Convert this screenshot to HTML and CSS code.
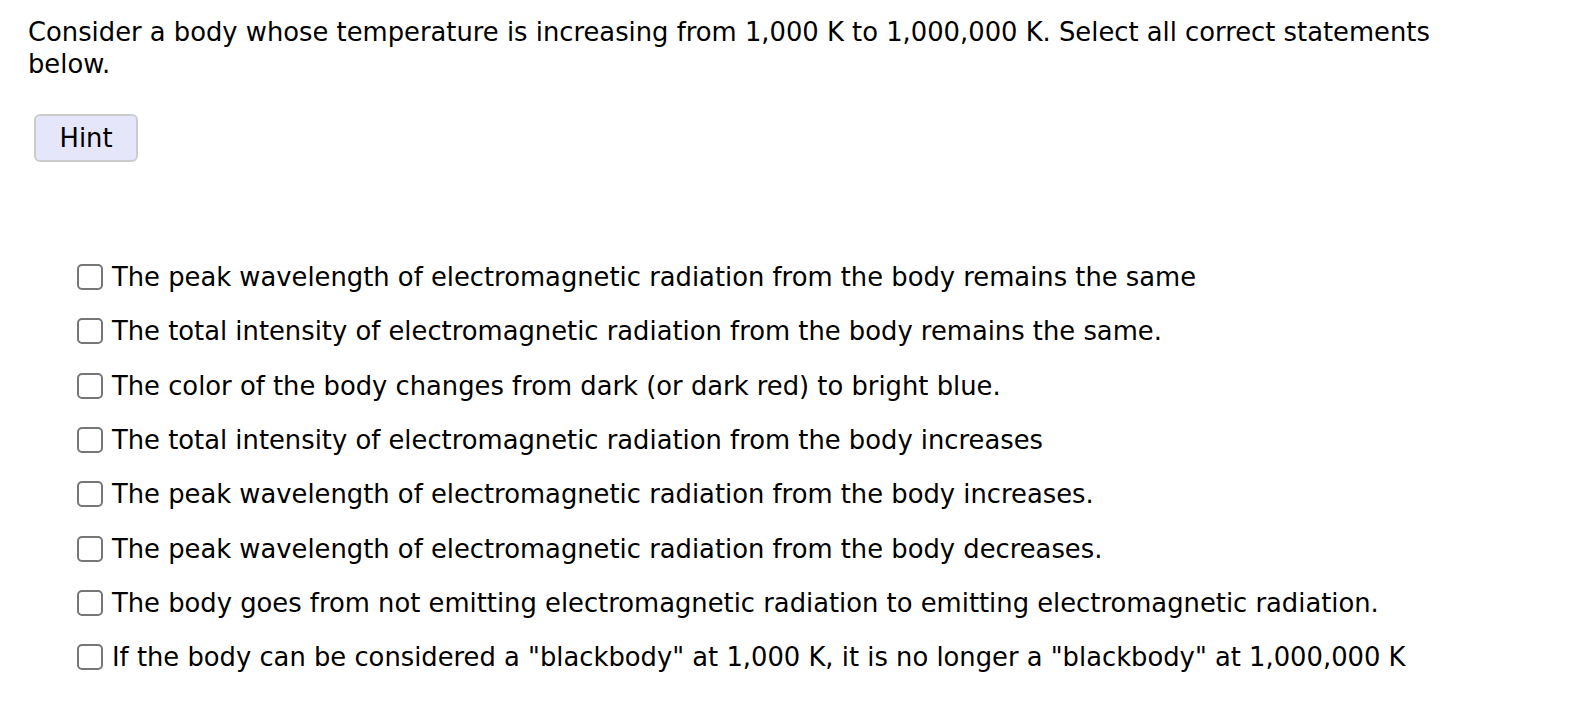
FILE: index.html
```html
<!DOCTYPE html>
<html>
<head>
<meta charset="utf-8">
<link rel="stylesheet" href="styles.css">
</head>
<body>
<div class="page">
  <p class="question">Consider a body whose temperature is increasing from 1,000 K to 1,000,000 K. Select all correct statements below.</p>
  <button class="hint" type="button">Hint</button>
  <ul class="choices">
    <li><label><input type="checkbox"><span>The peak wavelength of electromagnetic radiation from the body remains the same</span></label></li>
    <li><label><input type="checkbox"><span>The total intensity of electromagnetic radiation from the body remains the same.</span></label></li>
    <li><label><input type="checkbox"><span>The color of the body changes from dark (or dark red) to bright blue.</span></label></li>
    <li><label><input type="checkbox"><span>The total intensity of electromagnetic radiation from the body increases</span></label></li>
    <li><label><input type="checkbox"><span>The peak wavelength of electromagnetic radiation from the body increases.</span></label></li>
    <li><label><input type="checkbox"><span>The peak wavelength of electromagnetic radiation from the body decreases.</span></label></li>
    <li><label><input type="checkbox"><span>The body goes from not emitting electromagnetic radiation to emitting electromagnetic radiation.</span></label></li>
    <li><label><input type="checkbox"><span>If the body can be considered a "blackbody" at 1,000 K, it is no longer a "blackbody" at 1,000,000 K</span></label></li>
  </ul>
</div>
</body>
</html>
```
FILE: styles.css
```css
html, body {
  margin: 0;
  padding: 0;
  background: #ffffff;
}
body {
  font-family: "DejaVu Sans", sans-serif;
  font-size: 25.8px;
  color: #000000;
}
.page {
  padding: 16px 28px 0 28px;
  width: 1420px;
}
.question {
  margin: 0;
  line-height: 32px;
}
.hint {
  display: block;
  margin: 34px 0 0 6px;
  width: 104px;
  height: 48px;
  padding: 0;
  font-family: inherit;
  font-size: 25.8px;
  color: #000;
  background: #e6e6fa;
  border: 2px solid #cccccc;
  border-radius: 6px;
}
.choices {
  list-style: none;
  margin: 88px 0 0 0;
  padding: 0 0 0 49px;
}
.choices li {
  height: 54.3px;
  display: flex;
  align-items: center;
}
.choices label {
  display: flex;
  align-items: center;
  gap: 9px;
}
.choices input {
  appearance: none;
  -webkit-appearance: none;
  margin: 0;
  width: 26px;
  height: 26px;
  border: 2px solid #767676;
  border-radius: 5px;
  background: #fff;
  box-sizing: border-box;
  flex: none;
}
```
